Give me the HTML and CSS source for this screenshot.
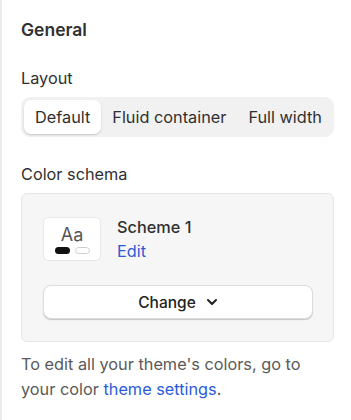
FILE: index.html
```html
<!DOCTYPE html>
<html lang="en">
<head>
  <meta charset="UTF-8" />
  <meta name="viewport" content="width=device-width, initial-scale=1.0" />
  <title>General settings</title>
  <link rel="stylesheet" href="styles.css">
</head>
<body>
  <div class="panel">
    <h2 class="title">General</h2>

    <div class="label">Layout</div>
    <div class="segmented">
      <button class="seg active">Default</button>
      <button class="seg">Fluid container</button>
      <button class="seg">Full width</button>
    </div>

    <div class="label">Color schema</div>
    <div class="scheme-card">
      <div class="scheme-row">
        <div class="swatch">
          <div class="swatch-aa">Aa</div>
          <div class="swatch-pills">
            <span class="pill dark"></span>
            <span class="pill light"></span>
          </div>
        </div>
        <div class="scheme-info">
          <div class="scheme-name">Scheme 1</div>
          <a class="link" href="#">Edit</a>
        </div>
      </div>
      <button class="change-btn">Change
        <svg width="12" height="12" viewBox="0 0 12 12"><path d="M2 4l4 4 4-4" fill="none" stroke="#222" stroke-width="2" stroke-linecap="round" stroke-linejoin="round"/></svg>
      </button>
    </div>

    <p class="hint">To edit all your theme's colors, go to<br>your color <a class="link" href="#">theme settings</a>.</p>
  </div>
</body>
</html>
```

FILE: styles.css
```css
body {
  margin: 0;
  background-color: #fff;
  font-family: Inter, "Noto Sans", sans-serif;
  color: #303030;
}
.panel {
  border-left: 2px solid #ebebeb;
  min-height: 420px;
  box-sizing: border-box;
  padding: 18px 17px 0 19px;
}
.title {
  font-size: 17.5px;
  font-weight: 600;
  margin: 0 0 26px;
  line-height: 24px;
}
.label {
  font-size: 16.3px;
  line-height: 20px;
  margin-bottom: 9px;
}
.segmented {
  display: flex;
  background-color: #f1f1f1;
  border-radius: 9px;
  padding: 3px;
  margin-bottom: 27px;
}
.seg {
  border: none;
  background: none;
  font-family: inherit;
  font-size: 16.3px;
  color: #303030;
  padding: 0 11px;
  height: 34px;
  border-radius: 7px;
  white-space: nowrap;
  cursor: pointer;
}
.seg.active {
  background-color: #fff;
  box-shadow: 0 1px 2px rgba(0, 0, 0, 0.18);
}
.scheme-card {
  background-color: #f6f6f6;
  border: 1px solid #e6e6e6;
  border-radius: 6px;
  padding: 23px 20px 22px 21px;
  display: flex;
  flex-direction: column;
  gap: 24px;
}
.scheme-row {
  display: flex;
  gap: 16px;
}
.swatch {
  width: 58px;
  height: 44px;
  box-sizing: border-box;
  background-color: #fff;
  border: 1px solid #e8e8e8;
  border-radius: 5px;
  display: flex;
  flex-direction: column;
  align-items: center;
  justify-content: center;
}
.swatch-aa {
  font-size: 18px;
  line-height: 20px;
  color: #555;
}
.swatch-pills {
  display: flex;
  gap: 5px;
  margin-top: 2px;
}
.pill {
  width: 15px;
  height: 7px;
  border-radius: 4px;
  box-sizing: border-box;
}
.pill.dark {
  background-color: #111;
}
.pill.light {
  background-color: #fff;
  border: 1px solid #cfcfcf;
}
.scheme-info {
  display: flex;
  flex-direction: column;
  gap: 4px;
}
.scheme-name {
  font-size: 16.3px;
  font-weight: 500;
  line-height: 20px;
}
.link {
  color: #2b5bd7;
  text-decoration: none;
}
.scheme-info .link {
  font-size: 16.3px;
  line-height: 20px;
}
.change-btn {
  height: 34px;
  background-color: #fff;
  border: 1px solid #dcdcdc;
  border-radius: 8px;
  box-shadow: 0 1px 1px rgba(0, 0, 0, 0.2);
  font-family: inherit;
  font-size: 15.5px;
  font-weight: 500;
  color: #222;
  display: flex;
  align-items: center;
  justify-content: center;
  gap: 10px;
  cursor: pointer;
}
.hint {
  margin: 10px 0 0;
  font-size: 16.3px;
  line-height: 25px;
  color: #595959;
}
```
